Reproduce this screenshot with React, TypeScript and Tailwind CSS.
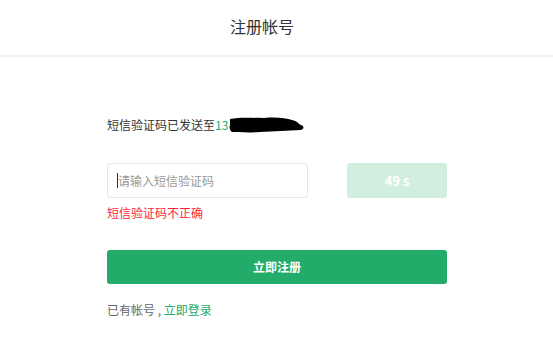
export default function App() {
  return (
    <div
      className="w-[553px] h-[337px] bg-white overflow-hidden text-[#333]"
      style={{ fontFamily: '"Microsoft YaHei", "Noto Sans CJK SC", "Noto Sans", sans-serif' }}
    >
      {/* Header */}
      <div className="h-[57px] flex items-center justify-center border-b-2 border-[#f2f2f2] pr-[29px] pb-[3px]">
        <h1 className="text-[16px] text-[#333]">注册帐号</h1>
      </div>

      <div className="pl-[107px] pr-[106px]">
        {/* Sent hint */}
        <div className="mt-[58px] h-[20px] flex items-center text-[12px] text-[#333]">
          <span>短信验证码已发送至</span>
          <span className="text-[#22ab69]">13</span>
          <svg width="78" height="18" viewBox="0 0 78 18" className="mt-[-1px]">
            <path
              d="M2 3 C12 1 24 2 36 2 C48 1 58 2 64 4 C68 5 70 6 71 8 L75 10 C76 12 75 14 72 14 C60 15 46 15 32 16 C20 17 10 16 4 16 C2 15 1 12 2 9 Z"
              fill="#000"
            />
          </svg>
        </div>

        {/* Code row */}
        <div className="mt-[28px] flex items-center justify-between">
          <div className="w-[201px] h-[35px] border border-[#e6e6e6] rounded-[3px] flex items-center pl-[9px]">
            <span className="w-[1px] h-[15px] bg-[#333]" />
            <span className="text-[12px] text-[#999]">请输入短信验证码</span>
          </div>
          <button className="w-[100px] h-[35px] rounded-[3px] bg-[#d2eedf] text-white text-[13px] font-bold">
            49 s
          </button>
        </div>

        {/* Error */}
        <p className="mt-[7px] text-[12px] leading-[16px] text-[#ff1f3d]">短信验证码不正确</p>

        {/* Submit */}
        <button className="mt-[29px] w-full h-[34px] rounded-[3px] bg-[#22ab69] text-white text-[12px] font-bold">
          立即注册
        </button>

        {/* Login link */}
        <p className="mt-[17px] text-[12px] text-[#666]">
          已有帐号 , <span className="text-[#22ab69]">立即登录</span>
        </p>
      </div>
    </div>
  );
}
